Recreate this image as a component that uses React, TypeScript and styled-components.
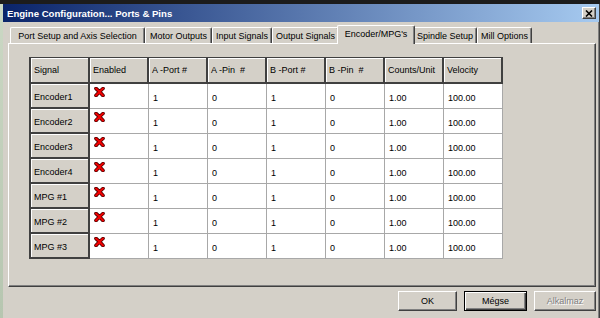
import React from 'react';
import styled, { createGlobalStyle, css } from 'styled-components';

const GlobalStyle = createGlobalStyle`
  html, body {
    margin: 0;
    padding: 0;
  }
  body {
    background: #1c1c1c;
    font-family: "Liberation Sans", Arial, sans-serif;
  }
  * {
    box-sizing: border-box;
  }
`;

const Screen = styled.div`
  display: flex;
  width: 600px;
  height: 318px;
  overflow: hidden;
  background: #1c1c1c;
`;

const Desktop = styled.div`
  width: 3px;
  margin-top: 4px;
  background: linear-gradient(#cbd8c4, #b6c6b0);
`;

const Window = styled.div`
  flex: 1;
  margin-top: 4px;
  display: flex;
  flex-direction: column;
  background: #d4d0c8;
  border-right: 1px solid #404040;
  box-shadow: inset -1px 0 #808080;
`;

const TitleBar = styled.div`
  height: 18px;
  display: flex;
  align-items: center;
  justify-content: space-between;
  padding: 0 3px 0 4px;
  background: linear-gradient(to right, #0a246a, #a6caf0);
`;

const Title = styled.span`
  color: #fff;
  font-weight: bold;
  font-size: 9.6px;
`;

const CloseButton = styled.div`
  width: 14px;
  height: 12px;
  display: flex;
  align-items: center;
  justify-content: center;
  background: #d4d0c8;
  border: 1px solid;
  border-color: #fff #404040 #404040 #fff;
  box-shadow: inset -1px -1px #808080;
`;

const Body = styled.div`
  flex: 1;
  display: flex;
  flex-direction: column;
  padding: 3px 3px 0 5px;
`;

const TabStrip = styled.div`
  display: flex;
  align-items: flex-end;
  height: 18px;
  padding-left: 2px;
`;

const Tab = styled.div<{ $w: number; $active?: boolean }>`
  width: ${({ $w }) => $w}px;
  height: 16px;
  display: flex;
  align-items: center;
  justify-content: center;
  font-size: 9px;
  color: #000;
  white-space: nowrap;
  background: #d4d0c8;
  border-top: 1px solid #fff;
  border-left: 1px solid #fff;
  border-right: 1px solid #404040;
  border-radius: 2px 2px 0 0;
  box-shadow: inset -1px 0 #808080;
  ${({ $active, $w }) =>
    $active &&
    css`
      width: ${$w + 4}px;
      height: 19px;
      margin: 0 -2px -1px;
      padding-bottom: 3px;
      position: relative;
      z-index: 1;
    `}
`;

const Panel = styled.div`
  height: 244px;
  padding: 13px 0 0 20px;
  border: 1px solid;
  border-color: #fff #404040 #404040 #fff;
  box-shadow: inset -1px -1px #808080;
`;

const Grid = styled.div`
  display: grid;
  grid-template-columns: repeat(8, 59px);
  grid-template-rows: 26px;
  grid-auto-rows: 25px;
  width: max-content;
  border-top: 1px solid #404040;
  border-left: 2px solid #404040;
  font-size: 9px;
  color: #000;
`;

const HeadCell = styled.div<{ $row?: boolean }>`
  display: flex;
  align-items: center;
  padding: ${({ $row }) => ($row ? '2px 0 0 3px' : '0 0 0 3px')};
  background: #d4d0c8;
  border-right: 2px solid #404040;
  border-bottom: 2px solid #404040;
  box-shadow: inset 1px 1px #fff;
  white-space: nowrap;
`;

const DataCell = styled.div`
  display: flex;
  align-items: center;
  padding: 3px 0 0 4px;
  background: #fff;
  border-right: 1px solid #a8a8a8;
  border-bottom: 1px solid #a8a8a8;
`;

const CheckCell = styled(DataCell)`
  align-items: flex-start;
  padding: 3px 0 0 4px;
`;

const ButtonBar = styled.div`
  display: flex;
  justify-content: flex-end;
  gap: 7px;
  padding-top: 4px;
`;

const Button = styled.div<{ $w: number; $default?: boolean; $disabled?: boolean }>`
  width: ${({ $w }) => $w}px;
  height: 20px;
  display: flex;
  align-items: center;
  justify-content: center;
  font-size: 9px;
  color: ${({ $disabled }) => ($disabled ? '#808080' : '#000')};
  text-shadow: ${({ $disabled }) => ($disabled ? '1px 1px #fff' : 'none')};
  background: #d4d0c8;
  border: 1px solid;
  border-color: #fff #404040 #404040 #fff;
  box-shadow: inset -1px -1px #808080;
  ${({ $default }) =>
    $default &&
    css`
      border-color: #000;
      box-shadow: inset 1px 1px #fff, inset -1px -1px #404040,
        inset -2px -2px #808080;
    `}
`;

function RedX() {
  return (
    <svg width="11" height="10" viewBox="0 0 11 10">
      <path
        d="M2 1.5 Q5 4 9 8.5 M9 1.5 Q5.5 4.5 2 8.5"
        stroke="#4a0000"
        strokeWidth="3.6"
        fill="none"
        strokeLinecap="round"
      />
      <path
        d="M2 1.5 Q5 4 9 8.5 M9 1.5 Q5.5 4.5 2 8.5"
        stroke="#f00000"
        strokeWidth="2"
        fill="none"
        strokeLinecap="round"
      />
    </svg>
  );
}

const tabs = [
  { label: 'Port Setup and Axis Selection', w: 135 },
  { label: 'Motor Outputs', w: 67 },
  { label: 'Input Signals', w: 60 },
  { label: 'Output Signals', w: 67 },
  { label: "Encoder/MPG's", w: 74, active: true },
  { label: 'Spindle Setup', w: 64 },
  { label: 'Mill Options', w: 55 },
];

const columns = ['Signal', 'Enabled', 'A -Port #', 'A -Pin  #', 'B -Port #', 'B -Pin  #', 'Counts/Unit', 'Velocity'];
const signals = ['Encoder1', 'Encoder2', 'Encoder3', 'Encoder4', 'MPG #1', 'MPG #2', 'MPG #3'];

export default function App() {
  return (
    <Screen>
      <GlobalStyle />
      <Desktop />
      <Window>
        <TitleBar>
          <Title>Engine Configuration... Ports &amp; Pins</Title>
          <CloseButton>
            <svg width="8" height="7" viewBox="0 0 8 7">
              <path d="M1 0.5 L7 6.5 M7 0.5 L1 6.5" stroke="#000" strokeWidth="1.6" />
            </svg>
          </CloseButton>
        </TitleBar>
        <Body>
          <TabStrip>
            {tabs.map(t => (
              <Tab key={t.label} $w={t.w} $active={t.active}>
                {t.label}
              </Tab>
            ))}
          </TabStrip>
          <Panel>
            <Grid>
              {columns.map(c => (
                <HeadCell key={c} style={{ whiteSpace: 'pre' }}>
                  {c}
                </HeadCell>
              ))}
              {signals.map(s => (
                <React.Fragment key={s}>
                  <HeadCell $row>{s}</HeadCell>
                  <CheckCell>
                    <RedX />
                  </CheckCell>
                  <DataCell>1</DataCell>
                  <DataCell>0</DataCell>
                  <DataCell>1</DataCell>
                  <DataCell>0</DataCell>
                  <DataCell>1.00</DataCell>
                  <DataCell>100.00</DataCell>
                </React.Fragment>
              ))}
            </Grid>
          </Panel>
          <ButtonBar>
            <Button $w={59}>OK</Button>
            <Button $w={63} $default>
              Mégse
            </Button>
            <Button $w={62} $disabled>
              Alkalmaz
            </Button>
          </ButtonBar>
        </Body>
      </Window>
    </Screen>
  );
}
